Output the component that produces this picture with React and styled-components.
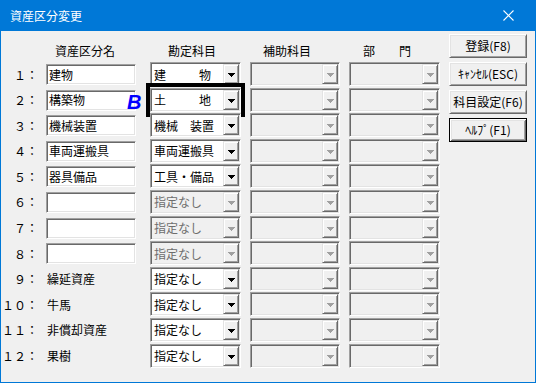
import React from "react";
import styled, { createGlobalStyle } from "styled-components";

const GlobalStyle = createGlobalStyle`
  html, body {
    margin: 0;
    padding: 0;
    background: #f0f0f0;
  }
  body {
    font-family: "Noto Sans CJK JP", "Noto Sans", sans-serif;
  }
`;

const Window = styled.div`
  width: 536px;
  height: 383px;
  box-sizing: border-box;
  border: 1px solid #0078d7;
  border-top: none;
  background: #f0f0f0;
  display: flex;
  flex-direction: column;
  font-family: "Noto Sans CJK JP", "Noto Sans", sans-serif;
  font-size: 12px;
  color: #000;
`;

const TitleBar = styled.div`
  height: 31px;
  flex: none;
  background: #0078d7;
  color: #fff;
  display: flex;
  align-items: center;
  padding-left: 9px;
  font-size: 12px;
`;

const Title = styled.div`
  flex: 1;
  line-height: 16px;
  padding-top: 1px;
`;

const CloseBox = styled.div`
  width: 46px;
  height: 31px;
  margin-right: 4px;
  display: flex;
  align-items: center;
  justify-content: center;
`;

const Body = styled.div`
  flex: 1;
  display: flex;
  align-items: flex-start;
`;

const Form = styled.div`
  display: grid;
  grid-template-columns: 45px 104px 100px 99px 91px;
  grid-template-rows: 31px repeat(12, 25.6px);
`;

const Header = styled.div`
  align-self: end;
  margin-bottom: 3px;
  line-height: 16px;
  padding-left: ${({ $indent }) => $indent}px;
  white-space: nowrap;
`;

const Cell = styled.div`
  position: relative;
  height: 24px;
  display: flex;
  align-items: center;
`;

const RowNo = styled(Cell)`
  justify-content: flex-end;
  padding-right: 8px;
  white-space: nowrap;
`;

const PlainName = styled.span`
  padding-left: 1px;
  white-space: nowrap;
`;

const TextBox = styled.div`
  box-sizing: border-box;
  width: 90px;
  height: 21px;
  align-self: flex-start;
  margin-top: 2px;
  background: #fff;
  border: 1px solid;
  border-color: #a0a0a0 #fff #fff #a0a0a0;
  box-shadow: inset 1px 1px 0 #696969, inset -1px -1px 0 #e3e3e3;
  padding: 0 2px 1px 2px;
  display: flex;
  align-items: center;
  white-space: nowrap;
`;

const Combo = styled.div`
  position: relative;
  box-sizing: border-box;
  width: ${({ $w }) => $w}px;
  height: 24px;
  padding: 1px;
  background: ${({ $disabled }) => ($disabled ? "#f0f0f0" : "#fff")};
  color: ${({ $disabled }) => ($disabled ? "#6d6d6d" : "#000")};
  border: 1px solid;
  border-color: #a0a0a0 #fff #fff #a0a0a0;
  box-shadow: inset 1px 1px 0 #696969, inset -1px -1px 0 #e3e3e3;
  display: flex;
`;

const ComboText = styled.div`
  flex: 1;
  padding-left: 2px;
  display: flex;
  align-items: center;
  white-space: nowrap;
  overflow: hidden;
  letter-spacing: ${({ $spread }) => ($spread ? "3px" : "0")};
`;

const DropButton = styled.div`
  box-sizing: border-box;
  width: 16px;
  height: 100%;
  background: #f0f0f0;
  border: 1px solid;
  border-color: #e3e3e3 #696969 #696969 #e3e3e3;
  box-shadow: inset 1px 1px 0 #fff, inset -1px -1px 0 #a0a0a0;
  display: flex;
  align-items: center;
  justify-content: center;
  padding-top: 2px;
`;

const Highlight = styled.div`
  position: absolute;
  inset: -6px -5px -6px -5px;
  border: 4px solid #000;
  pointer-events: none;
`;

const Badge = styled.span`
  position: absolute;
  left: 81px;
  top: 4px;
  font-family: "Liberation Sans", Arial, sans-serif;
  font-weight: 900;
  font-style: italic;
  font-size: 20px;
  line-height: 20px;
  color: #0000ff;
  z-index: 2;
`;

const ButtonColumn = styled.div`
  margin-left: 9px;
  padding-top: 3px;
  width: 78px;
  display: flex;
  flex-direction: column;
  gap: 4px;
`;

const Button = styled.div`
  box-sizing: border-box;
  height: 24px;
  background: #f0f0f0;
  border: 1px solid;
  border-color: ${({ $default }) =>
    $default ? "#000" : "#fff #696969 #696969 #fff"};
  box-shadow: ${({ $default }) =>
    $default
      ? "inset 1px 1px 0 #fff, inset -1px -1px 0 #696969, inset 2px 2px 0 #e3e3e3, inset -2px -2px 0 #a0a0a0"
      : "inset 1px 1px 0 #e3e3e3, inset -1px -1px 0 #a0a0a0"};
  display: flex;
  align-items: center;
  justify-content: center;
  white-space: nowrap;
  padding-bottom: 1px;
`;

const Arrow = ({ disabled }) => (
  <svg width="7" height="4" viewBox="0 0 7 4" shapeRendering="crispEdges">
    <path
      d="M0 0h7v1H0z M1 1h5v1H1z M2 2h3v1H2z M3 3h1v1H3z"
      fill={disabled ? "#a0a0a0" : "#000"}
    />
  </svg>
);

const Select = ({ w, text, disabled, spread, marked }) => (
  <Combo $w={w} $disabled={disabled}>
    <ComboText $spread={spread}>{text}</ComboText>
    <DropButton>
      <Arrow disabled={disabled} />
    </DropButton>
    {marked && <Highlight />}
  </Combo>
);

const rows = [
  { no: "１：", name: "建物", acc: "建　　物", spread: true },
  { no: "２：", name: "構築物", acc: "土　　地", spread: true, marked: true },
  { no: "３：", name: "機械装置", acc: "機械　装置" },
  { no: "４：", name: "車両運搬具", acc: "車両運搬具" },
  { no: "５：", name: "器具備品", acc: "工具・備品" },
  { no: "６：", name: "", acc: "指定なし", disabled: true },
  { no: "７：", name: "", acc: "指定なし", disabled: true },
  { no: "８：", name: "", acc: "指定なし", disabled: true },
  { no: "９：", label: "繰延資産", acc: "指定なし" },
  { no: "１０：", label: "牛馬", acc: "指定なし" },
  { no: "１１：", label: "非償却資産", acc: "指定なし" },
  { no: "１２：", label: "果樹", acc: "指定なし" },
];

const App = () => {
  return (
    <>
      <GlobalStyle />
      <Window>
        <TitleBar>
          <Title>資産区分変更</Title>
          <CloseBox>
            <svg width="11" height="11" viewBox="0 0 11 11">
              <path d="M0.5 0.5L10.5 10.5M10.5 0.5L0.5 10.5" stroke="#fff" strokeWidth="1.1" />
            </svg>
          </CloseBox>
        </TitleBar>
        <Body>
          <Form>
            <div />
            <Header $indent={9}>資産区分名</Header>
            <Header $indent={18}>勘定科目</Header>
            <Header $indent={13}>補助科目</Header>
            <Header $indent={14}>部　　門</Header>
            {rows.map((r, i) => (
              <React.Fragment key={i}>
                <RowNo>{r.no}</RowNo>
                <Cell>
                  {r.label ? (
                    <PlainName>{r.label}</PlainName>
                  ) : (
                    <TextBox>{r.name}</TextBox>
                  )}
                  {r.marked && <Badge>B</Badge>}
                </Cell>
                <Cell>
                  <Select
                    w={91}
                    text={r.acc}
                    disabled={r.disabled}
                    spread={r.spread}
                    marked={r.marked}
                  />
                </Cell>
                <Cell>
                  <Select w={90} text="" disabled />
                </Cell>
                <Cell>
                  <Select w={91} text="" disabled />
                </Cell>
              </React.Fragment>
            ))}
          </Form>
          <ButtonColumn>
            <Button>登録(F8)</Button>
            <Button>ｷｬﾝｾﾙ(ESC)</Button>
            <Button>科目設定(F6)</Button>
            <Button $default>ﾍﾙﾌﾟ(F1)</Button>
          </ButtonColumn>
        </Body>
      </Window>
    </>
  );
};

export default App;
